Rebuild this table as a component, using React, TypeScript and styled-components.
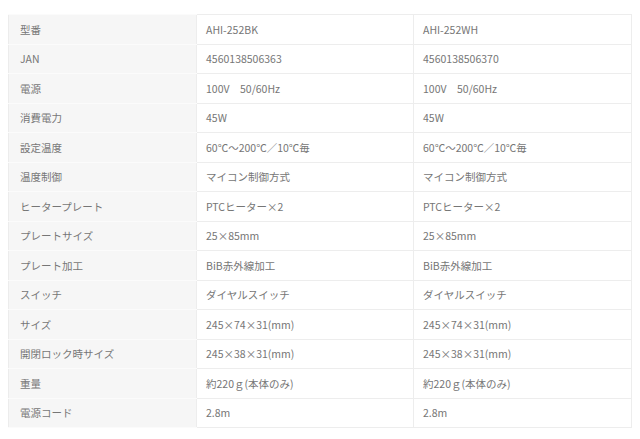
import React from 'react';
import styled, { createGlobalStyle } from 'styled-components';

const GlobalStyle = createGlobalStyle`
  html, body {
    margin: 0;
    padding: 0;
    background: #ffffff;
  }
  body {
    font-family: "Noto Sans CJK JP", "Noto Sans", sans-serif;
  }
`;

const Page = styled.div`
  padding: 14px 0 0 8px;
  width: 640px;
  box-sizing: border-box;
`;

const SpecTable = styled.table`
  width: 623px;
  border-collapse: collapse;
  table-layout: fixed;
  border: 1px solid #ececec;
`;

const Row = styled.tr`
  height: 29.5px;
`;

const Head = styled.th`
  background: #f6f6f6;
  border-bottom: 1px solid #fbfbfb;
  border-top: 1px solid #fbfbfb;
  text-align: left;
  font-weight: normal;
  font-size: 10.5px;
  color: #767676;
  padding: 0 0 0 11px;
  box-sizing: border-box;
`;

const Cell = styled.td`
  border: 1px solid #ededed;
  font-size: 10.5px;
  color: #767676;
  padding: 0 0 0 9px;
  box-sizing: border-box;
  white-space: nowrap;
`;

type Spec = { label: string; bk: string; wh: string };

const specs: Spec[] = [
  { label: '型番', bk: 'AHI-252BK', wh: 'AHI-252WH' },
  { label: 'JAN', bk: '4560138506363', wh: '4560138506370' },
  { label: '電源', bk: '100V\u300050/60Hz', wh: '100V\u300050/60Hz' },
  { label: '消費電力', bk: '45W', wh: '45W' },
  { label: '設定温度', bk: '60℃～200℃／10℃毎', wh: '60℃～200℃／10℃毎' },
  { label: '温度制御', bk: 'マイコン制御方式', wh: 'マイコン制御方式' },
  { label: 'ヒータープレート', bk: 'PTCヒーター×2', wh: 'PTCヒーター×2' },
  { label: 'プレートサイズ', bk: '25×85mm', wh: '25×85mm' },
  { label: 'プレート加工', bk: 'BiB赤外線加工', wh: 'BiB赤外線加工' },
  { label: 'スイッチ', bk: 'ダイヤルスイッチ', wh: 'ダイヤルスイッチ' },
  { label: 'サイズ', bk: '245×74×31(mm)', wh: '245×74×31(mm)' },
  { label: '開閉ロック時サイズ', bk: '245×38×31(mm)', wh: '245×38×31(mm)' },
  { label: '重量', bk: '約220ｇ(本体のみ)', wh: '約220ｇ(本体のみ)' },
  { label: '電源コード', bk: '2.8m', wh: '2.8m' }
];

export default function App() {
  return (
    <Page>
      <GlobalStyle />
      <SpecTable>
        <colgroup>
          <col style={{ width: 188 }} />
          <col style={{ width: 217 }} />
          <col style={{ width: 218 }} />
        </colgroup>
        <tbody>
          {specs.map((s) => (
            <Row key={s.label}>
              <Head>{s.label}</Head>
              <Cell>{s.bk}</Cell>
              <Cell>{s.wh}</Cell>
            </Row>
          ))}
        </tbody>
      </SpecTable>
    </Page>
  );
}
